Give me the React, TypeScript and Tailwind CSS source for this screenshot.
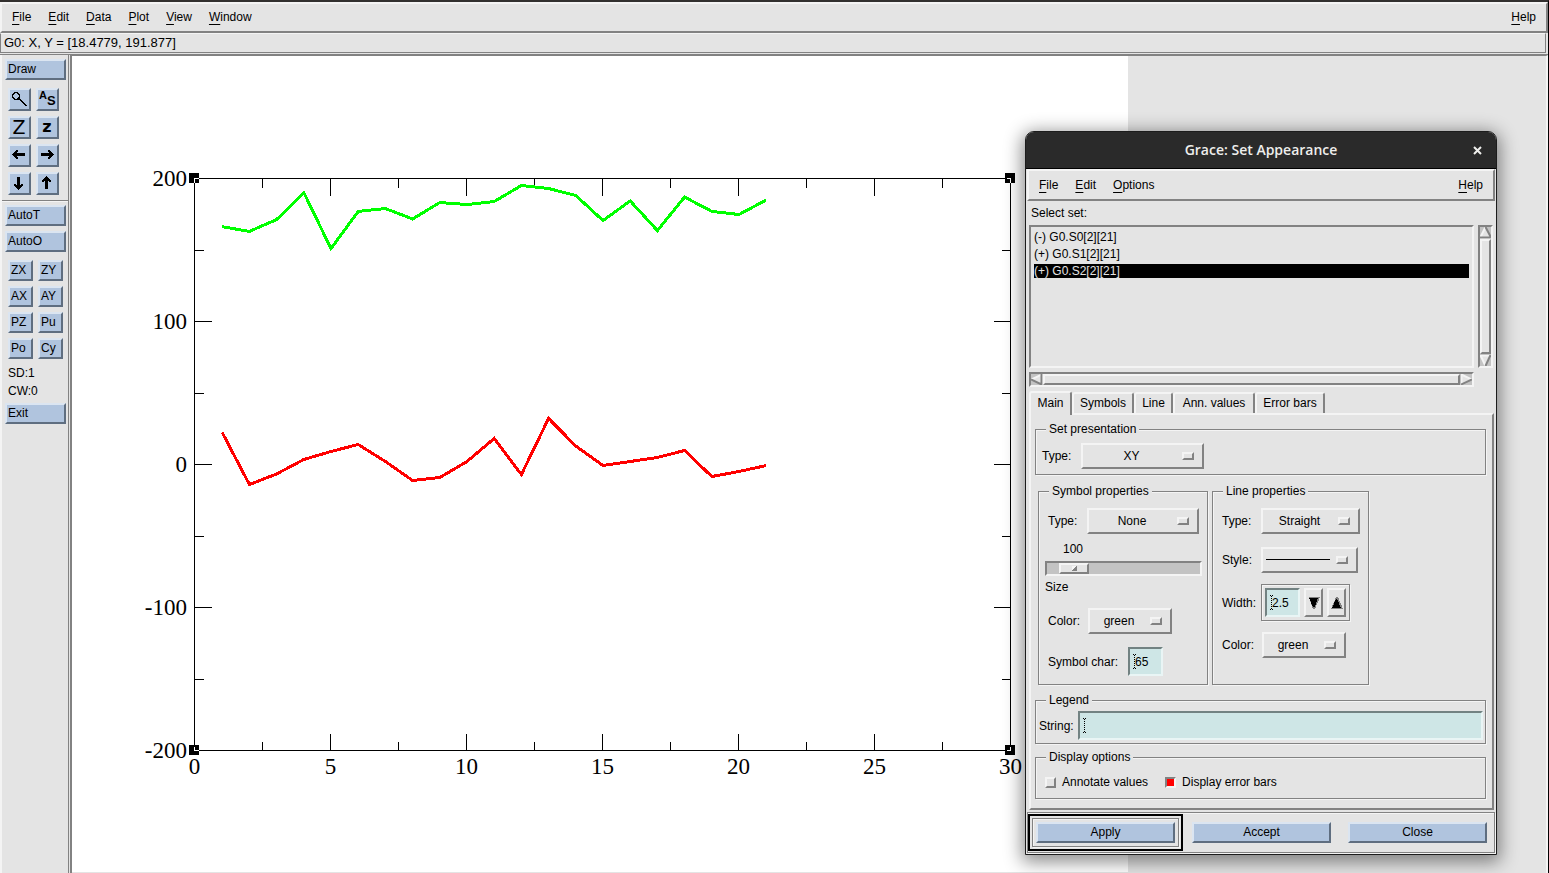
import { useState, type ReactNode } from "react";

// Motif style bevels
const RAISED =
  "border-2 border-t-[#f4f4f4] border-l-[#f4f4f4] border-b-[#828282] border-r-[#828282]";
const SUNKEN =
  "border-2 border-t-[#828282] border-l-[#828282] border-b-[#f4f4f4] border-r-[#f4f4f4]";
const ETCHED =
  "border border-[#828282] shadow-[1px_1px_0_#f4f4f4,inset_1px_1px_0_#f4f4f4]";
const BLUE =
  "bg-[#b0c4de] border-2 border-t-[#dbe5f1] border-l-[#dbe5f1] border-b-[#5f6e80] border-r-[#5f6e80]";
const ENTRY =
  "bg-[#cee6e6] border-2 border-t-[#728282] border-l-[#728282] border-b-[#e9f5f5] border-r-[#e9f5f5]";

const green = [
  166.3, 163, 171.3, 190.2, 151, 177, 179, 171.7, 183.2, 181.8, 183.9, 195.1,
  193, 188.1, 170.6, 184.3, 163.6, 187, 177, 174.8, 185,
];
const red = [
  22.4, -14, -6.6, 3.5, 9.1, 14, 2.1, -11.2, -9.1, 2.1, 18.2, -7, 32.2, 12.9,
  -0.7, 2.1, 4.9, 9.8, -8.4, -4.9, -0.7,
];

const px = (v: number) => 122.5 + v * 27.2;
const py = (v: number) => 408.5 - v * 1.43;
const toPoints = (data: number[]) =>
  data.map((v, i) => `${px(i + 1) + 0.5},${py(v)}`).join(" ");

function Graph() {
  const xTicks = [0, 2.5, 5, 7.5, 10, 12.5, 15, 17.5, 20, 22.5, 25, 27.5, 30];
  const yTicks = [-200, -150, -100, -50, 0, 50, 100, 150, 200];
  const left = px(0);
  const right = px(30);
  const top = py(200);
  const bottom = py(-200);
  const corners = [
    [left, top, 1, 1],
    [right, top, -1, 1],
    [left, bottom, 1, -1],
    [right, bottom, -1, -1],
  ];

  return (
    <svg
      viewBox="0 0 1056 816"
      className="block h-[816px] w-[1056px] shrink-0 bg-white"
      shapeRendering="crispEdges"
    >
      <g stroke="#000" fill="none">
        <path d={`M${left} ${top}H${right}V${bottom}H${left}Z`} />
        {xTicks.map((t) => {
          const len = t % 5 === 0 ? 17 : 9;
          return (
            <path
              key={t}
              d={`M${px(t)} ${top}v${len}M${px(t)} ${bottom}v${-len}`}
            />
          );
        })}
        {yTicks.map((t) => {
          const len = t % 100 === 0 ? 17 : 9;
          return (
            <path
              key={t}
              d={`M${left} ${py(t)}h${len}M${right} ${py(t)}h${-len}`}
            />
          );
        })}
      </g>

      {corners.map(([x, y, dx, dy]) => (
        <g key={`${x}-${y}`}>
          <rect x={x - 5.5} y={y - 5.5} width="10" height="10" />
          <path
            d={`M${x + 4 * dx} ${y}H${x}V${y + 4 * dy}`}
            stroke="#fff"
            fill="none"
          />
        </g>
      ))}

      <polyline points={toPoints(green)} fill="none" stroke="#00ff00" strokeWidth="3" />
      <polyline points={toPoints(red)} fill="none" stroke="#ff0000" strokeWidth="3" />

      <g className="font-['Liberation_Serif',serif] text-[23px]">
        {[0, 5, 10, 15, 20, 25, 30].map((t) => (
          <text key={t} x={px(t)} y="718" textAnchor="middle">
            {t}
          </text>
        ))}
        {[200, 100, 0, -100, -200].map((t) => (
          <text key={t} x="115" y={py(t) + 7} textAnchor="end">
            {t}
          </text>
        ))}
      </g>
    </svg>
  );
}

function MenuItem({ label }: { label: string }) {
  return (
    <button type="button">
      <span className="underline decoration-1 underline-offset-[3px]">
        {label[0]}
      </span>
      {label.slice(1)}
    </button>
  );
}

function SideButton({ children }: { children: ReactNode }) {
  return (
    <button
      type="button"
      className={`h-[21px] w-[61px] px-px pb-[2px] text-left ${BLUE}`}
    >
      {children}
    </button>
  );
}

function IconButton({ label, children }: { label: string; children: ReactNode }) {
  return (
    <button
      type="button"
      aria-label={label}
      className={`flex h-[23px] w-[23px] items-center justify-center ${BLUE}`}
    >
      <svg
        viewBox="0 0 17 17"
        className="h-[17px] w-[17px] shrink-0 overflow-visible"
        shapeRendering="crispEdges"
      >
        {children}
      </svg>
    </button>
  );
}

// points left, the other directions mirror or transpose it
const ARROW =
  "M5 3h2v1H5zM4 4h3v1H4zM3 5h3v1H3zM2 6h12v1H2zM1 7h13v1H1zM2 8h12v1H2zM3 9h3v1H3zM4 10h3v1H4zM5 11h2v1H5z";

function Sidebar() {
  return (
    <aside className="flex w-[69px] shrink-0 flex-col border-r border-r-[#828282] border-l-2 border-l-[#f4f4f4] pt-1 pl-[3px]">
      <SideButton>Draw</SideButton>
      <div className="mt-2 ml-[3px] grid grid-cols-[23px_23px] gap-[5px]">
        <IconButton label="Zoom">
          <path d="M3 1h4v1H3zM2 2h2v1H2zM6 2h2v1H6zM1 3h1v4H1zM8 3h1v4H8zM2 3h1v1H2zM7 3h1v1H7zM2 6h1v2H2zM7 6h1v2H7zM3 7h1v2H3zM6 7h1v2H6zM4 8h2v1H4z" />
          <path d="M8 7h1v1h1v1h1v1h1v1h1v1h1v1h1v1h1v1h-2v-1h-1v-1h-1v-1h-1v-1h-1v-1H9v-1H8V9H7V8h1z" />
        </IconButton>
        <IconButton label="Autoscale">
          <text x="0" y="8" className="font-['Liberation_Sans',sans-serif] text-[11px] font-bold">
            A
          </text>
          <text x="8" y="14" className="font-['Liberation_Sans',sans-serif] text-[13px] font-bold">
            S
          </text>
        </IconButton>
        <IconButton label="Zoom in">
          <text x="8" y="15" textAnchor="middle" className="font-['DejaVu_Sans',sans-serif] text-[19px]">
            Z
          </text>
        </IconButton>
        <IconButton label="Zoom out">
          <text x="8" y="13" textAnchor="middle" className="font-['DejaVu_Sans',sans-serif] text-[16px] font-bold">
            z
          </text>
        </IconButton>
        <IconButton label="Scroll left">
          <path d={ARROW} />
        </IconButton>
        <IconButton label="Scroll right">
          <path d={ARROW} transform="matrix(-1 0 0 1 16 0)" />
        </IconButton>
        <IconButton label="Scroll down">
          <path d={ARROW} transform="matrix(0 -1 1 0 0 16)" />
        </IconButton>
        <IconButton label="Scroll up">
          <path d={ARROW} transform="matrix(0 1 1 0 0 0)" />
        </IconButton>
      </div>

      <hr className="mt-[5px] mb-1 -ml-[3px] border-0 border-t border-t-[#828282] shadow-[0_1px_0_#f4f4f4]" />

      <SideButton>AutoT</SideButton>
      <div className="h-[5px]" />
      <SideButton>AutoO</SideButton>

      <div className="mt-2 ml-[3px] grid grid-cols-[25px_25px] gap-[5px]">
        {["ZX", "ZY", "AX", "AY", "PZ", "Pu", "Po", "Cy"].map((name) => (
          <button
            key={name}
            type="button"
            className={`h-[21px] px-px pb-[2px] text-left ${BLUE}`}
          >
            {name}
          </button>
        ))}
      </div>

      <p className="mt-[5px] pl-[3px] leading-[18px]">SD:1</p>
      <p className="mb-[3px] pl-[3px] leading-[18px]">CW:0</p>
      <SideButton>Exit</SideButton>
    </aside>
  );
}

function OptionMenu({
  id,
  label,
  value,
  width,
}: {
  id: string;
  label: string;
  value: string;
  width: string;
}) {
  return (
    <div className="flex items-center gap-2">
      <label htmlFor={id} className="min-w-[31px]">
        {label}
      </label>
      <div className={`relative ${width}`}>
        <select
          id={id}
          className={`block h-[26px] w-full appearance-none pr-[22px] text-center outline-none ${RAISED}`}
        >
          <option>{value}</option>
        </select>
        {value === "" && (
          <span className="pointer-events-none absolute top-3 right-7 left-[5px] h-px bg-black" />
        )}
        <span
          className={`pointer-events-none absolute top-[9px] right-[10px] h-2 w-3 ${RAISED}`}
        />
      </div>
    </div>
  );
}

function Entry({
  id,
  initial,
  width,
}: {
  id: string;
  initial: string;
  width: string;
}) {
  const [value, setValue] = useState(initial);
  return (
    <div className={`relative ${width}`}>
      <input
        id={id}
        type="text"
        value={value}
        onChange={(e) => setValue(e.target.value)}
        className={`block h-[29px] w-full pl-[5px] outline-none ${ENTRY}`}
      />
      {/* insertion cursor */}
      <svg
        viewBox="0 0 5 15"
        className="pointer-events-none absolute top-[7px] left-1 h-[15px] w-[5px]"
        shapeRendering="crispEdges"
      >
        <path d="M1 0h1v1H1zM3 0h1v1H3zM1 14h1v1H1zM3 14h1v1H3z" />
        <path d="M2 1h1v1H2zM2 3h1v1H2zM2 5h1v1H2zM2 7h1v1H2zM2 9h1v1H2zM2 11h1v1H2zM2 13h1v1H2z" />
      </svg>
    </div>
  );
}

function Frame({
  title,
  className,
  children,
}: {
  title: string;
  className?: string;
  children: ReactNode;
}) {
  return (
    <fieldset className={`min-w-0 ${ETCHED} ${className ?? ""}`}>
      <legend className="ml-[10px] bg-[#e4e4e4] px-[3px] leading-[14px]">
        {title}
      </legend>
      {children}
    </fieldset>
  );
}

function ScrollArrow({ dir }: { dir: "up" | "down" | "left" | "right" }) {
  const shapes = {
    up: ["M5.500 0L11 11H0z", "M5.500 0L0 11", "M0 10.500h11L5.500 0"],
    down: ["M0 0h11L5.500 11z", "M11 .5H0.500L5.500 11", "M10.500 0L5.500 11"],
    left: ["M0 5.500L11 0v11z", "M0 5.500L11 .5", "M10.500 0v10.500L0 5.500"],
    right: ["M0 0l11 5.500L0 11z", "M.5 11V0.500L11 5.500", "M0 10.500L11 5.500"],
  };
  const [face, light, dark] = shapes[dir];
  return (
    <svg viewBox="0 0 11 11" className="block h-[11px] w-[11px] shrink-0">
      <path d={face} fill="#e4e4e4" />
      <path d={light} fill="none" stroke="#f4f4f4" strokeWidth="2" />
      <path d={dark} fill="none" stroke="#828282" strokeWidth="2" />
    </svg>
  );
}

function SetList() {
  const sets = ["(-) G0.S0[2][21]", "(+) G0.S1[2][21]", "(+) G0.S2[2][21]"];
  const [selected, setSelected] = useState(2);
  return (
    <div className="mr-[2px] ml-[3px] grid grid-cols-[1fr_15px] grid-rows-[143px_15px] gap-1 pr-px">
      <ul className={`flex flex-col gap-[3px] p-[3px] ${SUNKEN}`}>
        {sets.map((name, i) => (
          <li key={name} className="h-[14px]">
            <button
              type="button"
              onClick={() => setSelected(i)}
              className={
                i === selected
                  ? "block w-full bg-black text-left leading-[14px] text-[#e4e4e4]"
                  : "block w-full text-left leading-[14px]"
              }
            >
              {name}
            </button>
          </li>
        ))}
      </ul>
      <div className={`flex flex-col gap-px bg-[#c3c3c3] ${SUNKEN}`}>
        <ScrollArrow dir="up" />
        <div className={`flex-1 bg-[#e4e4e4] ${RAISED}`} />
        <ScrollArrow dir="down" />
      </div>
      <div className={`flex gap-px bg-[#c3c3c3] ${SUNKEN}`}>
        <ScrollArrow dir="left" />
        <div className={`flex-1 bg-[#e4e4e4] ${RAISED}`} />
        <ScrollArrow dir="right" />
      </div>
    </div>
  );
}

function Tabs() {
  const tabs = ["Main", "Symbols", "Line", "Ann. values", "Error bars"];
  const widths = ["w-[43px]", "w-[62px]", "w-[39px]", "w-[82px]", "w-[70px]"];
  return (
    <div role="tablist" className="ml-[3px] flex h-[22px] items-end">
      {tabs.map((name, i) => (
        <button
          key={name}
          type="button"
          role="tab"
          aria-selected={i === 0}
          className={`rounded-t-[3px] border-t-2 border-r-2 border-l-2 border-t-[#f4f4f4] border-r-[#828282] border-l-[#f4f4f4] text-center whitespace-nowrap ${
            i === 0
              ? "relative -mb-[2px] h-6 bg-[#e4e4e4] pb-[3px]"
              : "h-[21px] pb-px"
          } ${widths[i]}`}
        >
          {name}
        </button>
      ))}
    </div>
  );
}

function ActionButton({ children }: { children: ReactNode }) {
  return (
    <button
      type="button"
      className={`block h-[21px] w-full text-center leading-[17px] ${BLUE}`}
    >
      {children}
    </button>
  );
}

function SetAppearance() {
  const [size, setSize] = useState(100);
  return (
    <div
      role="dialog"
      aria-labelledby="dialog-title"
      className="absolute top-[129px] right-[51px] w-[472px] rounded-t-[9px] border border-[#1c1c1c] bg-[#e4e4e4] shadow-[0_4px_18px_3px_rgba(0,0,0,0.45)]"
    >
      <header className="relative flex h-[37px] items-center justify-center rounded-t-lg border-b border-b-black bg-[#2a2a2a] font-['Open_Sans',sans-serif] text-[14px] font-semibold text-[#eeeeec]">
        <h1 id="dialog-title">Grace: Set Appearance</h1>
        <button
          type="button"
          aria-label="Close window"
          className="absolute top-[14px] right-[14px] h-[9px] w-[9px]"
        >
          <svg viewBox="0 0 9 9" className="h-[9px] w-[9px]">
            <path d="M1 1l7 7M8 1L1 8" stroke="#eeeeec" strokeWidth="2" />
          </svg>
        </button>
      </header>

      <nav className={`mx-px flex h-8 items-center gap-[17px] px-[10px] ${RAISED}`}>
        <MenuItem label="File" />
        <MenuItem label="Edit" />
        <MenuItem label="Options" />
        <span className="flex-1" />
        <MenuItem label="Help" />
      </nav>

      <p className="pl-[5px] leading-6">Select set:</p>
      <SetList />
      <div className="h-1" />
      <Tabs />

      <div className={`mr-[2px] ml-[3px] pt-[7px] pr-[6px] pb-[9px] pl-1 ${RAISED}`}>
        <Frame title="Set presentation">
          <div className="pt-[7px] pb-[5px] pl-[6px]">
            <OptionMenu id="set-type" label="Type:" value="XY" width="w-[123px]" />
          </div>
        </Frame>

        <div className="mt-[9px] ml-[3px] flex items-stretch gap-1">
          <Frame title="Symbol properties" className="w-[170px]">
            <div className="pt-[10px] pb-2 pl-[9px]">
              <OptionMenu id="symbol-type" label="Type:" value="None" width="w-[112px]" />
              <div className="mt-2 -ml-[3px] flex w-[157px] flex-col">
                <output htmlFor="symbol-size" className="pl-[18px] leading-[14px]">
                  {size}
                </output>
                <input
                  id="symbol-size"
                  type="range"
                  min={0}
                  max={1000}
                  value={size}
                  onChange={(e) => setSize(Number(e.target.value))}
                  className={`mt-[5px] mb-1 h-[15px] w-full appearance-none bg-[#c3c3c3] [&::-webkit-slider-thumb]:h-[11px] [&::-webkit-slider-thumb]:w-[30px] [&::-webkit-slider-thumb]:appearance-none [&::-webkit-slider-thumb]:border-2 [&::-webkit-slider-thumb]:border-t-[#f4f4f4] [&::-webkit-slider-thumb]:border-r-[#828282] [&::-webkit-slider-thumb]:border-b-[#828282] [&::-webkit-slider-thumb]:border-l-[#f4f4f4] [&::-webkit-slider-thumb]:bg-[#e4e4e4] [&::-webkit-slider-thumb]:bg-[linear-gradient(135deg,#f4f4f4_50%,#828282_50%)] [&::-webkit-slider-thumb]:bg-[length:5px_5px] [&::-webkit-slider-thumb]:bg-center [&::-webkit-slider-thumb]:bg-no-repeat ${SUNKEN}`}
                />
                <label htmlFor="symbol-size" className="leading-[14px]">
                  Size
                </label>
              </div>
              <div className="mt-[14px]">
                <OptionMenu id="symbol-color" label="Color:" value="green" width="w-[84px]" />
              </div>
              <div className="mt-[13px] flex items-center gap-[10px]">
                <label htmlFor="symbol-char">Symbol char:</label>
                <Entry id="symbol-char" initial="65" width="w-[35px]" />
              </div>
            </div>
          </Frame>

          <Frame title="Line properties" className="w-[157px]">
            <div className="pt-[10px] pl-[9px]">
              <OptionMenu id="line-type" label="Type:" value="Straight" width="w-[99px]" />
              <div className="mt-[13px]">
                <OptionMenu id="line-style" label="Style:" value="" width="w-[97px]" />
              </div>
              <div className="mt-[11px] flex items-center gap-[5px]">
                <label htmlFor="line-width">Width:</label>
                <div className={`flex gap-1 p-[3px] ${ETCHED}`}>
                  <Entry id="line-width" initial="2.5" width="w-[35px]" />
                  <button
                    type="button"
                    aria-label="Decrease width"
                    className={`flex w-[19px] items-center justify-center ${RAISED}`}
                  >
                    <svg viewBox="0 0 12 12" className="h-3 w-3 shrink-0" shapeRendering="crispEdges">
                      <path d="M1 0h11L7 12H5z" fill="#828282" />
                      <path d="M1 1h9L7 10H5z" />
                    </svg>
                  </button>
                  <button
                    type="button"
                    aria-label="Increase width"
                    className={`flex w-[19px] items-center justify-center ${RAISED}`}
                  >
                    <svg viewBox="0 0 12 12" className="h-3 w-3 shrink-0" shapeRendering="crispEdges">
                      <path d="M5 0h2l5 12H0z" fill="#828282" />
                      <path d="M5 2h1l4 9H1z" />
                    </svg>
                  </button>
                </div>
              </div>
              <div className="mt-[11px]">
                <OptionMenu id="line-color" label="Color:" value="green" width="w-[84px]" />
              </div>
            </div>
          </Frame>
        </div>

        <Frame title="Legend" className="mt-2">
          <div className="flex items-center gap-1 pt-1 pr-[2px] pb-[3px] pl-[3px]">
            <label htmlFor="legend">String:</label>
            <Entry id="legend" initial="" width="flex-1" />
          </div>
        </Frame>

        <Frame title="Display options" className="mt-[6px]">
          <div className="flex items-center gap-[17px] pt-[11px] pb-[9px] pl-[9px] leading-[14px]">
            {["Annotate values", "Display error bars"].map((name, i) => (
              <label key={name} className="flex items-center gap-[6px]">
                <input
                  type="checkbox"
                  defaultChecked={i === 1}
                  className={`h-[11px] w-[11px] appearance-none checked:border-t-[#828282] checked:border-r-[#f4f4f4] checked:border-b-[#f4f4f4] checked:border-l-[#828282] checked:bg-[#ff0000] ${RAISED}`}
                />
                {name}
              </label>
            ))}
          </div>
        </Frame>
      </div>

      <footer className={`mx-px mt-[2px] mb-px flex h-[41px] items-center gap-[9px] pr-[7px] ${ETCHED}`}>
        <div className="flex-1 border-2 border-black p-[2px]">
          <div className={`px-[3px] py-[3px] ${ETCHED}`}>
            <ActionButton>Apply</ActionButton>
          </div>
        </div>
        <div className="w-[139px]">
          <ActionButton>Accept</ActionButton>
        </div>
        <div className="ml-2 w-[139px]">
          <ActionButton>Close</ActionButton>
        </div>
      </footer>
    </div>
  );
}

export default function App() {
  return (
    <div className="relative flex h-screen flex-col overflow-hidden border-t-2 border-r border-t-[#32302f] border-r-black bg-[#e4e4e4] font-['Liberation_Sans',sans-serif] text-[12px] leading-4 text-black">
      <nav className={`flex h-[31px] shrink-0 items-center gap-[17px] px-[10px] pb-[2px] ${RAISED}`}>
        {["File", "Edit", "Data", "Plot", "View", "Window"].map((name) => (
          <MenuItem key={name} label={name} />
        ))}
        <span className="flex-1" />
        <MenuItem label="Help" />
      </nav>

      <div className="mr-[2px] flex h-5 shrink-0 items-center border border-[#828282] border-t-[#f4f4f4] pl-[3px] text-[13px]">
        G0: X, Y = [18.4779, 191.877]
      </div>

      <div className="mt-px flex min-h-0 flex-1 border-t border-t-[#828282]">
        <Sidebar />
        <main className="ml-px flex min-w-0 flex-1 overflow-hidden border-t border-r-2 border-l-2 border-t-[#828282] border-r-[#f4f4f4] border-l-[#828282]">
          <Graph />
        </main>
      </div>

      <SetAppearance />
    </div>
  );
}
